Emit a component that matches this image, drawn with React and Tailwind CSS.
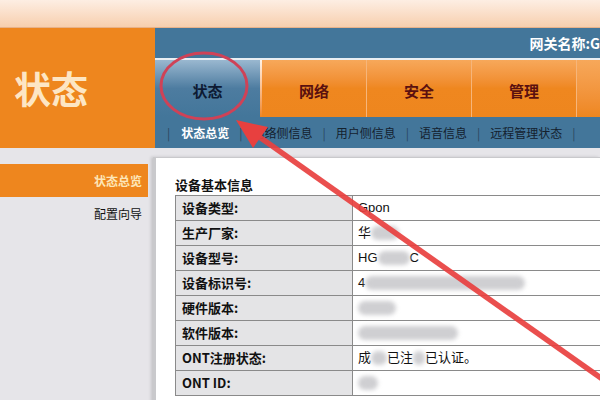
import React from 'react';

const cjk = "font-['Noto_Sans_CJK_SC','Liberation_Sans',sans-serif]";

const rows = [
  { label: '设备类型:', value: <span>Gpon</span> },
  { label: '生产厂家:', value: <span className="flex items-center">华<Blob w={28} /></span> },
  { label: '设备型号:', value: <span className="flex items-center">HG<Blob w={32} />C</span> },
  { label: '设备标识号:', value: <span className="flex items-center">4<Blob w={160} /></span> },
  { label: '硬件版本:', value: <span className="flex items-center"><Blob w={38} /></span> },
  { label: '软件版本:', value: <span className="flex items-center"><Blob w={100} /></span> },
  { label: 'ONT注册状态:', value: <span className="flex items-center">成<Blob w={16} />已注<Blob w={12} />已认证。</span> },
  { label: 'ONT ID:', value: <span className="flex items-center"><Blob w={20} /></span> },
];

function Blob({ w }) {
  return <span className="inline-block h-[14px] rounded-full bg-[#cfcfd2] blur-[2px]" style={{ width: w }} />;
}

const tabs = ['网络', '安全', '管理'];
const subs = ['网络侧信息', '用户侧信息', '语音信息', '远程管理状态'];

export default function App() {
  return (
    <div className={`relative w-[600px] h-[400px] overflow-hidden bg-[#e6e5e9] ${cjk}`}>
      {/* top band */}
      <div className="h-[28px] bg-gradient-to-b from-[#fdeee3] to-[#f7cfae] border-b border-[#e7b28a]" />

      {/* header */}
      <div className="flex h-[120px]">
        <div className="w-[155px] shrink-0 bg-[#ee861e] flex items-center pl-[14px]">
          <span className="text-[37px] font-bold text-[#fde6c4] leading-none">状态</span>
        </div>
        <div className="flex-1 flex flex-col bg-[#43769a]">
          <div className="h-[30px] flex items-center justify-end whitespace-nowrap">
            <span className="text-[14px] font-bold text-white">网关名称:G</span>
          </div>
          <div className="h-[2px] bg-[#e8eef3]" />
          <div className="h-[57px] flex bg-[#ee861e]">
            <div className="w-[105px] pt-[6px] bg-gradient-to-b from-[#9ab8d0] via-[#4d7ca0] to-[#43769a] flex items-center justify-center">
              <span className="text-[15px] font-bold text-[#0d1a33]">状态</span>
            </div>
            <div className="w-[2px] bg-gradient-to-b from-[#fff3e6] to-[#ee861e]" />
            {tabs.map((t) => (
              <div key={t} className="w-[105px] pt-[6px] bg-gradient-to-b from-[#f7a85a] via-[#ef871f] to-[#ee861e] flex items-center justify-center border-r border-[#f6b57a]">
                <span className="text-[15px] font-bold text-[#5a1010]">{t}</span>
              </div>
            ))}
            <div className="flex-1 bg-gradient-to-b from-[#f7a85a] to-[#ee861e]" />
          </div>
          <div className="h-[31px] flex items-center text-[12px] whitespace-nowrap pl-[12px]">
            <span className="text-[#2a4660]">|</span>
            <span className="ml-[11px] mr-[10px] font-bold text-white">状态总览</span>
            {subs.map((s) => (
              <React.Fragment key={s}>
                <span className="text-[#2a4660]">|</span>
                <span className="mx-[10px] text-[#14212e]">{s}</span>
              </React.Fragment>
            ))}
            <span className="text-[#2a4660]">|</span>
          </div>
        </div>
      </div>

      {/* body */}
      <div className="flex">
        <div className="w-[148px] shrink-0 pt-[16px] flex flex-col">
          <div className="h-[33px] bg-[#ee861e] flex items-center justify-end pr-[6px]">
            <span className="text-[12px] font-bold text-[#fde6b8]">状态总览</span>
          </div>
          <div className="h-[33px] flex items-center justify-end pr-[6px]">
            <span className="text-[12px] text-[#111]">配置向导</span>
          </div>
        </div>
        <div className="flex-1 min-w-0 pt-[9px] pl-[5px]">
          <div className="h-[260px] overflow-hidden bg-white border-l-[3px] border-t border-[#c9c9cc] shadow-[-2px_0_3px_rgba(0,0,0,0.15)] pl-[19px] pt-[16px]">
            <div className="text-[13px] font-bold text-[#111] h-[21px] leading-[21px]">设备基本信息</div>
            <div className="w-[460px] border-t border-l border-[#8a8a8a]">
              {rows.map((r) => (
                <div key={r.label} className="flex h-[25px] border-b border-[#8a8a8a]">
                  <div className="w-[177px] shrink-0 bg-[#e4e4e6] border-r border-[#8a8a8a] flex items-center pl-[6px] text-[13px] font-bold text-[#111]">
                    {r.label}
                  </div>
                  <div className="flex-1 flex items-center pl-[5px] text-[13px] text-[#111] font-['Liberation_Sans','Noto_Sans_CJK_SC',sans-serif]">
                    {r.value}
                  </div>
                </div>
              ))}
            </div>
          </div>
        </div>
      </div>

      {/* annotation overlay */}
      <svg className="absolute left-0 top-0" width="600" height="400" viewBox="0 0 600 400">
        <ellipse cx="204" cy="86" rx="43" ry="33" fill="none" stroke="#cf4257" strokeWidth="3" />
        <line x1="258" y1="136" x2="615" y2="388" stroke="#e8403f" strokeWidth="5.5" strokeOpacity="0.92" />
        <polygon points="236,120 253,148 268,127" fill="#e8403f" />
      </svg>
    </div>
  );
}
